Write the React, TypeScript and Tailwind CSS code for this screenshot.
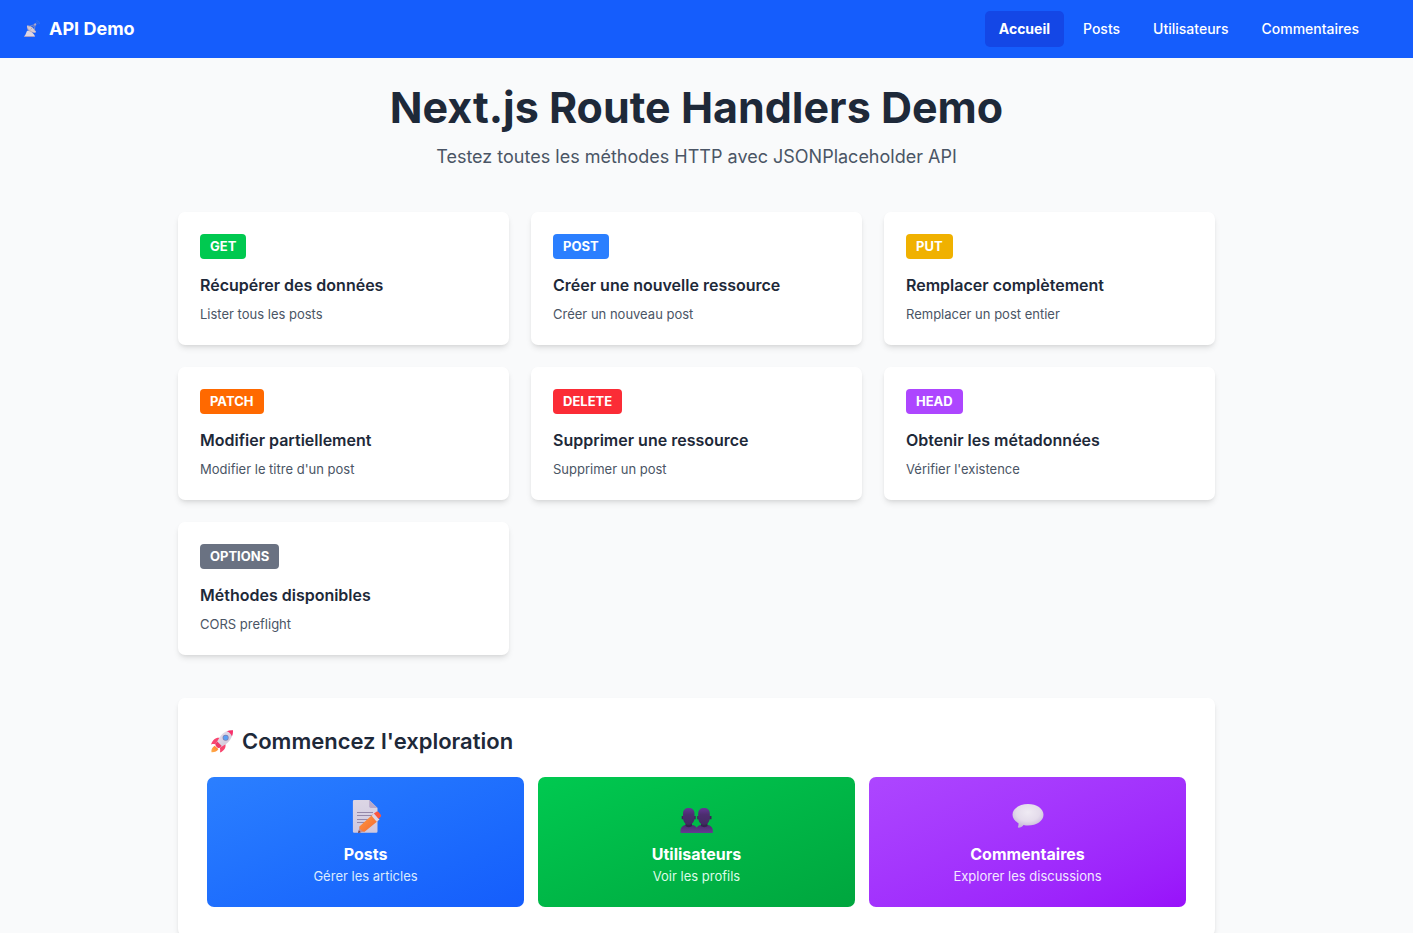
import React from "react";

function SatelliteIcon() {
  return (
    <svg viewBox="0 0 20 20" className="h-[18px] w-[18px] shrink-0" aria-hidden="true">
      <path d="M1.500 18.500c0-.8.4-1.300 1-1.700L4.500 12H8.500l4 4.500c.5.5.5 1.300.5 2z" fill="#ddd5e3" />
      <path d="M1.500 17.800h11.500v1H1.500z" fill="#a79bc0" />
      <path d="M4.500 6.500c-.8 4 2.500 8 9 7.500 1-.2 1.200-1 .4-1.800z" fill="#bdaec0" />
      <path d="M4.500 6.500c1-.8 4 .2 6.300 2.200 2.500 2 3.800 4.500 2.900 5.200-3 .3-9.500-4.500-9.200-7.400z" fill="#d8cbd2" />
      <path d="M8.500 10.500l5-5.500M6 7.500l7-2.500M12.500 12l1-7" stroke="#a39bb5" strokeWidth=".8" fill="none" />
      <circle cx="13.600" cy="4.900" r="1.200" fill="#b7a9c8" />
      <path d="M14.500 2.500c1.300.2 2 1 2.100 2.200M15 .8c2 .3 3.200 1.600 3.300 3.700" stroke="#4a78dc" strokeWidth=".8" fill="none" />
    </svg>
  );
}

function RocketIcon() {
  return (
    <svg viewBox="0 0 32 32" className="h-[26px] w-[26px] shrink-0" aria-hidden="true">
      <defs>
        <linearGradient id="rocket-body" x1="0" y1="0" x2="1" y2="1">
          <stop offset="0" stopColor="#ece5f0" />
          <stop offset="1" stopColor="#cabfd3" />
        </linearGradient>
        <linearGradient id="rocket-flame" x1="1" y1="0" x2="0" y2="1">
          <stop offset="0" stopColor="#ff7a2e" />
          <stop offset="1" stopColor="#ffb04a" />
        </linearGradient>
      </defs>
      <path d="M7 20.500c-3 1.500-4.500 4.500-4 8 4 .2 7-1 8.500-4z" fill="url(#rocket-flame)" />
      <path d="M13.500 11c-5-1-9 2.500-11 8 3-.7 5.500-.5 7.500.5z" fill="#f8456f" />
      <path d="M20 18c1.500 5-1.500 8.500-6.500 11 .6-3 .2-5.500-1-7.500z" fill="#f8456f" />
      <path d="M29.500 1.500c-7-.5-13 3-16.500 9l-5 8 5 5 8-5c5.500-4 8.500-10 8.500-17z" fill="url(#rocket-body)" />
      <path d="M22 2.900c2.500-1.200 5-1.600 7.500-1.400.2 2.700-.3 5.200-1.300 7.500-1-2.500-3.200-5-6.200-6.100z" fill="#f8316b" />
      <path d="M8 18.500l2.200-3.200 5.500 5.700-3.200 2.500c-2 .3-5-2.700-4.500-5z" fill="#ee3a68" />
      <circle cx="20.500" cy="10.800" r="3.700" fill="#7d7fb0" />
      <circle cx="20.500" cy="10.800" r="2.800" fill="#5a9ff5" />
    </svg>
  );
}

function MemoIcon() {
  return (
    <svg viewBox="0 0 36 36" className="h-9 w-9" aria-hidden="true">
      <defs>
        <linearGradient id="memo-page" x1="0" y1="0" x2="0" y2="1">
          <stop offset="0" stopColor="#dcd6e5" />
          <stop offset="1" stopColor="#d0c8df" />
        </linearGradient>
        <linearGradient id="memo-pencil" x1="0" y1="0" x2="1" y2="1">
          <stop offset="0" stopColor="#ff9b40" />
          <stop offset="1" stopColor="#f36632" />
        </linearGradient>
      </defs>
      <path d="M6.200 1h15L29.500 9v23.500a1.300 1.300 0 0 1-1.300 1.300H6.200a1.300 1.300 0 0 1-1.300-1.300V2.300A1.300 1.300 0 0 1 6.200 1z" fill="url(#memo-page)" />
      <path d="M21.200 1L29.500 9h-6.600a1.700 1.700 0 0 1-1.700-1.700z" fill="#b7a9ca" />
      <path d="M9 13.500h16M9 16.500h16M9 20.500h13M9 23.500h9" stroke="#9487a9" strokeWidth="1.100" />
      <path d="M10 34l1.600-6.500 5 5z" fill="#c98f8c" />
      <path d="M10 34l.8-2.800 2 2z" fill="#673e52" />
      <path d="M11.400 27.600l13.600-12.300 5.400 6.200-13.800 11.200c-2.200.3-5.400-2.900-5.200-5.100z" fill="url(#memo-pencil)" />
      <path d="M23.600 16.700l2.500-2.300 5.400 6.200-2.800 2.200z" fill="#ddd5e4" />
      <path d="M25.900 14.600l2.500-1.900c.7-.5 1.700-.4 2.200.3l2.200 2.800c.5.700.4 1.600-.3 2.200l-2 1.700z" fill="#fb563f" />
    </svg>
  );
}

function UsersIcon() {
  return (
    <svg viewBox="0 0 36 36" className="h-9 w-9" aria-hidden="true">
      <defs>
        <linearGradient id="bust-head" x1="0" y1="0" x2="0" y2="1">
          <stop offset="0" stopColor="#643795" />
          <stop offset=".4" stopColor="#4c2d6f" />
          <stop offset="1" stopColor="#412a62" />
        </linearGradient>
        <linearGradient id="bust-body" x1="0" y1="0" x2="0" y2="1">
          <stop offset="0" stopColor="#4d2c70" />
          <stop offset="1" stopColor="#653b92" />
        </linearGradient>
      </defs>
      <path d="M1.500 34v-2.500C1.500 28 4.500 26 7.500 26h5c3 0 6 2 6 5.500V34z" fill="url(#bust-body)" />
      <path d="M16.800 34v-2.500c0-3.500 3-5.500 6-5.500h5c3 0 6 2 6 5.500V34z" fill="url(#bust-body)" />
      <path d="M6.500 23H13v4c-1.500 1.500-5 1.500-6.500 0zM22 23h6.500v4c-1.500 1.500-5 1.500-6.500 0z" fill="#34234f" />
      <path d="M2.700 17h14v3.200h-14zM18.200 17h14.300v3.200H18.200z" fill="#3a2656" />
      <path d="M4 14.500C4 10.900 6.200 9 9.700 9s5.800 1.900 5.800 5.500v4.500c0 3.700-2.500 6.800-5.800 6.800S4 22.700 4 19z" fill="url(#bust-head)" />
      <path d="M19.200 14.500c0-3.600 2.300-5.500 5.800-5.500s5.800 1.900 5.800 5.500v4.500c0 3.700-2.500 6.800-5.800 6.800s-5.800-3.100-5.800-6.800z" fill="url(#bust-head)" />
    </svg>
  );
}

function SpeechIcon() {
  return (
    <svg viewBox="0 0 36 36" className="h-9 w-9" aria-hidden="true">
      <defs>
        <radialGradient id="speech-fill" cx=".5" cy=".35" r=".75">
          <stop offset="0" stopColor="#efeaf3" />
          <stop offset=".5" stopColor="#e4dceb" />
          <stop offset="1" stopColor="#b9a9d2" />
        </radialGradient>
      </defs>
      <path d="M18 5c8.700 0 15.500 4.600 15.500 10.700S26.700 26.500 18 26.500c-1.600 0-3-.1-4.500-.5-1.300 1.800-2.900 2.800-4.800 2.800-.8 0-1-.6-.7-1.200.5-1 .6-2.200.4-3.500C4.800 22 2.500 19 2.500 15.700 2.500 9.600 9.300 5 18 5z" fill="url(#speech-fill)" />
    </svg>
  );
}

const links = ["Posts", "Utilisateurs", "Commentaires"];

const methods = [
  { name: "GET", color: "bg-[#00c950]", title: "Récupérer des données", text: "Lister tous les posts" },
  { name: "POST", color: "bg-[#2b7fff]", title: "Créer une nouvelle ressource", text: "Créer un nouveau post" },
  { name: "PUT", color: "bg-[#f0b100]", title: "Remplacer complètement", text: "Remplacer un post entier" },
  { name: "PATCH", color: "bg-[#ff6900]", title: "Modifier partiellement", text: "Modifier le titre d'un post" },
  { name: "DELETE", color: "bg-[#fb2c36]", title: "Supprimer une ressource", text: "Supprimer un post" },
  { name: "HEAD", color: "bg-[#ad46ff]", title: "Obtenir les métadonnées", text: "Vérifier l'existence" },
  { name: "OPTIONS", color: "bg-[#6a7282]", title: "Méthodes disponibles", text: "CORS preflight" },
];

const tiles = [
  { Icon: MemoIcon, title: "Posts", text: "Gérer les articles", color: "from-[#2b7fff] to-[#155dfc]", sub: "text-[#dbeafe]" },
  { Icon: UsersIcon, title: "Utilisateurs", text: "Voir les profils", color: "from-[#00c950] to-[#00a63e]", sub: "text-[#dcfce7]" },
  { Icon: SpeechIcon, title: "Commentaires", text: "Explorer les discussions", color: "from-[#ad46ff] to-[#9810fa]", sub: "text-[#f3e8ff]" },
];

export default function App() {
  return (
    <div className="min-h-screen bg-[#f9fafb] font-['Inter',sans-serif] text-[#1e2939]">
      <nav className="flex h-[58px] items-center justify-between bg-[#155dfc] pr-10 pl-[23px] text-white">
        <a href="#accueil" className="flex items-center gap-2 text-lg font-bold">
          <SatelliteIcon />
          API Demo
        </a>
        <div className="flex gap-[5px] text-[14px] leading-[22px] font-medium">
          <a href="#accueil" aria-current="page" className="rounded-[5px] bg-[#1447e6] px-[14px] py-[7px] font-bold">
            Accueil
          </a>
          {links.map((link) => (
            <a key={link} href={`#${link.toLowerCase()}`} className="rounded-[5px] px-[14px] py-[7px]">
              {link}
            </a>
          ))}
        </div>
      </nav>

      <main className="pt-7 pr-5 pb-11">
        <div className="mx-auto max-w-[1037px]">
          <header className="mb-[43px] text-center">
            <h1 className="mb-[15px] text-[43px] leading-[43px] font-bold">Next.js Route Handlers Demo</h1>
            <p className="text-[18px] leading-[25px] text-[#4a5565]">Testez toutes les méthodes HTTP avec JSONPlaceholder API</p>
          </header>

          <div className="mb-[43px] grid grid-cols-3 gap-[22px]">
            {methods.map((m) => (
              <article key={m.name} className="flex flex-col items-start rounded-[7px] bg-white p-[22px] shadow-md">
                <span className={`mb-[14px] rounded-[4px] px-[10px] text-[13px] leading-[25px] font-bold text-white ${m.color}`}>
                  {m.name}
                </span>
                <h3 className="mb-[7px] text-[16px] leading-[25px] font-semibold">{m.title}</h3>
                <p className="text-[13px] leading-[18px] text-[#4a5565]">{m.text}</p>
              </article>
            ))}
          </div>

          <section className="rounded-[7px] bg-white p-[29px] shadow-md">
            <h2 className="mb-[21px] flex items-center gap-[7px] pl-[2px] text-[22px] leading-[29px] font-semibold">
              <RocketIcon />
              Commencez l'exploration
            </h2>
            <div className="grid grid-cols-3 gap-[14px]">
              {tiles.map(({ Icon, title, text, color, sub }) => (
                <a
                  key={title}
                  href={`#${title.toLowerCase()}`}
                  className={`flex flex-col items-center rounded-[7px] bg-gradient-to-br p-[22px] text-center text-white ${color}`}
                >
                  <Icon />
                  <h3 className="mt-[7px] text-[16px] leading-[25px] font-bold">{title}</h3>
                  <p className={`text-[13px] leading-[18px] ${sub}`}>{text}</p>
                </a>
              ))}
            </div>
          </section>
        </div>
      </main>
    </div>
  );
}
